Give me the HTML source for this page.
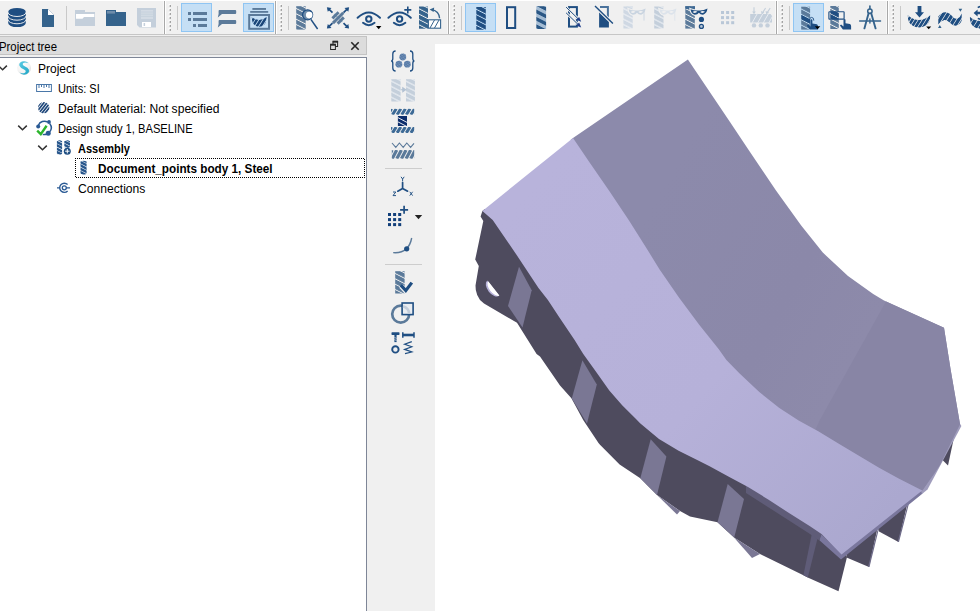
<!DOCTYPE html>
<html>
<head>
<meta charset="utf-8">
<title>Project</title>
<style>
html,body{margin:0;padding:0;}
body{width:980px;height:611px;overflow:hidden;background:#f0f0f0;font-family:"Liberation Sans",sans-serif;font-size:12px;color:#000;position:relative;}
.abs{position:absolute;}
#topline{left:0;top:0;width:980px;height:1px;background:#fff;}
#tbline{left:0;top:34px;width:980px;height:1px;background:#c6c6c6;}
#title{left:-1px;top:36px;width:368px;height:19px;background:#dcdcdc;border:1px solid #c3c3c3;box-sizing:border-box;}
#tree{left:-1px;top:57px;width:368px;height:560px;background:#fff;border:1px solid #7e8697;box-sizing:border-box;}
#view{left:435px;top:44px;width:545px;height:567px;background:#fff;}
.t{position:absolute;white-space:nowrap;line-height:16px;height:16px;transform-origin:0 50%;}
.b{font-weight:bold;}
svg{position:absolute;overflow:visible;}
</style>
</head>
<body>
<div id="topline" class="abs"></div>
<div id="tbline" class="abs"></div>
<div id="title" class="abs"></div>
<div id="tree" class="abs"></div>
<div id="view" class="abs"></div>

<!-- TOOLBAR -->
<svg id="tb" class="abs" style="left:0;top:0;" width="980" height="36" viewBox="0 0 980 36">
<defs>
<pattern id="pDB" width="20" height="5.35" patternUnits="userSpaceOnUse" patternTransform="translate(0,2.8) skewY(27)"><rect width="20" height="4.35" fill="#1f4e82"/></pattern>
<pattern id="pMB" width="20" height="5.35" patternUnits="userSpaceOnUse" patternTransform="translate(0,2.8) skewY(27)"><rect width="20" height="4.35" fill="#35638c"/></pattern>
<pattern id="pGB" width="20" height="5.35" patternUnits="userSpaceOnUse" patternTransform="translate(0,2.8) skewY(27)"><rect width="20" height="4.35" fill="#5b7a9a"/></pattern>
<pattern id="pDS" width="20" height="5.35" patternUnits="userSpaceOnUse" patternTransform="translate(0,2.8) skewY(27)"><rect width="20" height="4" fill="#c4cfdb"/><rect y="4" width="20" height="1.35" fill="#e1e7ee"/></pattern>
<pattern id="pTR" width="20" height="7.4" patternUnits="userSpaceOnUse" patternTransform="translate(0,-4) skewY(27)"><rect width="20" height="3.7" fill="#2a5785"/><rect y="3.7" width="20" height="3.7" fill="#a3bbd3"/></pattern>
<pattern id="pDG" width="3.2" height="20" patternUnits="userSpaceOnUse" patternTransform="skewX(-35)"><rect width="2.1" height="20" fill="#5b7a9a"/></pattern>
<pattern id="pDGd" width="3.9" height="20" patternUnits="userSpaceOnUse" patternTransform="translate(1,0) skewX(-32)"><rect width="3.05" height="20" fill="#1b4679"/></pattern>
<pattern id="pDGs" width="3.6" height="20" patternUnits="userSpaceOnUse" patternTransform="skewX(-35)"><rect width="2.3" height="20" fill="#5b7a9a"/></pattern>
</defs>
<path d="M8.2,12 A8.8,4.1 0 0 1 25.8,12 V23 A8.8,4.1 0 0 1 8.2,23 Z" fill="#1f4e82"/><g fill="none" stroke="#f0f0f0" stroke-width="0.95"><path d="M8,12.3 A8.8,4.1 0 0 0 26,12.3"/><path d="M8,16 A8.8,4.1 0 0 0 26,16"/><path d="M8,19.6 A8.8,4.1 0 0 0 26,19.6"/></g>
<path d="M42,9 H48 L54,15 V27 H42 Z" fill="#35638c"/><path d="M48,9 L54,15 H48 Z" fill="#fff"/>
<rect x="66" y="6" width="1" height="24" fill="#c9c9c9"/>
<path d="M75,10 H85 V12 H95 V26 H75 Z" fill="#c4cfdb"/><path d="M76,14 H94.3 V17 H84 L82.5,18.7 H76 Z" fill="#fff"/>
<path d="M106,10 H116 V12 H126 V26 H106 Z" fill="#35638c"/><rect x="107" y="11" width="8" height="2.6" fill="#6f8dab"/>
<path d="M137,8 H156 V27.6 H139.5 L137,25 Z" fill="#c4cfdb"/><rect x="141" y="10" width="12" height="9" fill="#d3dbe4"/><g stroke="#c4cfdb" stroke-width="0.8"><path d="M141,12 H153 M141,14.2 H153 M141,16.4 H153"/></g><rect x="142" y="22" width="9" height="5" fill="#fff"/><rect x="143.6" y="23" width="1.5" height="3" fill="#c4cfdb"/>
<rect x="163" y="1" width="1" height="33" fill="#f8f8f8"/><rect x="164" y="1" width="1" height="33" fill="#a8a8a8"/><rect x="165" y="1" width="1" height="33" fill="#fff"/>
<rect x="168.6" y="4.2" width="1.8" height="1.8" fill="#fff"/><rect x="169.6" y="5.0" width="1.4" height="1.9" fill="#a0a0a0"/>
<rect x="168.6" y="8.2" width="1.8" height="1.8" fill="#fff"/><rect x="169.6" y="9.0" width="1.4" height="1.9" fill="#a0a0a0"/>
<rect x="168.6" y="12.2" width="1.8" height="1.8" fill="#fff"/><rect x="169.6" y="13.0" width="1.4" height="1.9" fill="#a0a0a0"/>
<rect x="168.6" y="16.2" width="1.8" height="1.8" fill="#fff"/><rect x="169.6" y="17.0" width="1.4" height="1.9" fill="#a0a0a0"/>
<rect x="168.6" y="20.2" width="1.8" height="1.8" fill="#fff"/><rect x="169.6" y="21.0" width="1.4" height="1.9" fill="#a0a0a0"/>
<rect x="168.6" y="24.2" width="1.8" height="1.8" fill="#fff"/><rect x="169.6" y="25.0" width="1.4" height="1.9" fill="#a0a0a0"/>
<rect x="168.6" y="28.2" width="1.8" height="1.8" fill="#fff"/><rect x="169.6" y="29.0" width="1.4" height="1.9" fill="#a0a0a0"/>
<rect x="177" y="6" width="1" height="24" fill="#c9c9c9"/>
<rect x="181.5" y="3.5" width="30" height="28" fill="#c5dff5" stroke="#8fc5f3" stroke-width="1"/>
<rect x="188" y="12" width="3" height="3" fill="#5b7a9a"/><rect x="193" y="12" width="14" height="3" fill="#5b7a9a"/>
<rect x="188" y="18" width="3" height="3" fill="#5b7a9a"/><rect x="193" y="18" width="14" height="3" fill="#5b7a9a"/>
<rect x="193" y="24" width="3" height="3" fill="#5b7a9a"/><rect x="198" y="24" width="9" height="3" fill="#5b7a9a"/>
<path d="M219.4,10 H235.2 Q236.2,10 236.2,11 V13 Q236.2,14 235.2,14 H222 L217.8,17.6 L218.6,14 V11 Q218.6,10 219.4,10 Z" fill="#5b7a9a"/>
<path d="M219.4,20 H235.2 Q236.2,20 236.2,21 V23 Q236.2,24 235.2,24 H222 L217.8,27.6 L218.6,24 V21 Q218.6,20 219.4,20 Z" fill="#5b7a9a"/>
<rect x="243.5" y="3.5" width="30" height="28" fill="#c5dff5" stroke="#8fc5f3" stroke-width="1"/>
<rect x="252.4" y="8" width="13.6" height="1.9" fill="#5b7a9a"/><rect x="250.2" y="11" width="18" height="1.8" fill="#5b7a9a"/><rect x="249.2" y="15" width="19.8" height="13.8" fill="none" stroke="#5b7a9a" stroke-width="2"/>
<clipPath id="cq1"><path d="M251.8,17 Q252,22.6 254,24.6 Q256.5,26.8 259.2,26.8 Q262,26.8 264.4,24.6 Q266.4,22.6 266.6,17 Q259.2,23 251.8,17 Z"/></clipPath><g clip-path="url(#cq1)" stroke="#1b4679" stroke-width="2.5" fill="none"><path d="M244.00,28 L251.50,16 M247.89,28 L255.39,16 M251.78,28 L259.28,16 M255.68,28 L263.17,16 M259.57,28 L267.07,16 M263.46,28 L270.96,16 M267.35,28 L274.85,16 M271.24,28 L278.74,16"/></g>
<rect x="274" y="1" width="1" height="33" fill="#f8f8f8"/><rect x="275" y="1" width="1" height="33" fill="#a8a8a8"/><rect x="276" y="1" width="1" height="33" fill="#fff"/>
<rect x="279.6" y="4.2" width="1.8" height="1.8" fill="#fff"/><rect x="280.6" y="5.0" width="1.4" height="1.9" fill="#a0a0a0"/>
<rect x="279.6" y="8.2" width="1.8" height="1.8" fill="#fff"/><rect x="280.6" y="9.0" width="1.4" height="1.9" fill="#a0a0a0"/>
<rect x="279.6" y="12.2" width="1.8" height="1.8" fill="#fff"/><rect x="280.6" y="13.0" width="1.4" height="1.9" fill="#a0a0a0"/>
<rect x="279.6" y="16.2" width="1.8" height="1.8" fill="#fff"/><rect x="280.6" y="17.0" width="1.4" height="1.9" fill="#a0a0a0"/>
<rect x="279.6" y="20.2" width="1.8" height="1.8" fill="#fff"/><rect x="280.6" y="21.0" width="1.4" height="1.9" fill="#a0a0a0"/>
<rect x="279.6" y="24.2" width="1.8" height="1.8" fill="#fff"/><rect x="280.6" y="25.0" width="1.4" height="1.9" fill="#a0a0a0"/>
<rect x="279.6" y="28.2" width="1.8" height="1.8" fill="#fff"/><rect x="280.6" y="29.0" width="1.4" height="1.9" fill="#a0a0a0"/>
<rect x="288" y="6" width="1" height="24" fill="#c9c9c9"/>
<g transform="translate(296.2,6.2)"><rect x="0" y="0" width="9.5" height="23.4" fill="url(#pGB)"/></g>
<circle cx="307.6" cy="14.8" r="5" fill="#6f8dab" stroke="#1f4e82" stroke-width="1.3"/><circle cx="309.2" cy="15.1" r="3.3" fill="#fff"/><path d="M310.9,19.4 L317.6,29" stroke="#1f4e82" stroke-width="1.5" fill="none"/>
<path d="M328.1,8.4 L332.5,12.6" stroke="#1f4e82" stroke-width="1.7"/>
<path d="M326.9,7.3 L327.8,11.8 L331.5,7.9Z" fill="#1f4e82"/>
<path d="M347.9,8.4 L343.5,12.7" stroke="#1f4e82" stroke-width="1.7"/>
<path d="M349.1,7.3 L344.5,8.0 L348.3,11.8Z" fill="#1f4e82"/>
<path d="M328.1,27.4 L332.5,23.2" stroke="#1f4e82" stroke-width="1.7"/>
<path d="M326.9,28.5 L331.5,27.9 L327.8,24.0Z" fill="#1f4e82"/>
<path d="M347.9,27.4 L343.5,23.1" stroke="#1f4e82" stroke-width="1.7"/>
<path d="M349.1,28.5 L348.3,24.0 L344.5,27.8Z" fill="#1f4e82"/>
<path d="M334,14 L342.4,22" stroke="#a9bdd1" stroke-width="1.2"/>
<path d="M332.4,18.4 L338.6,12.2" stroke="#5b7a9a" stroke-width="2.9"/>
<path d="M332.9,23.1 L343.3,12.7" stroke="#5b7a9a" stroke-width="2.9"/>
<path d="M337.6,23.6 L343.8,17.4" stroke="#5b7a9a" stroke-width="2.9"/>
<g stroke="#1f4e82" fill="none" stroke-linecap="round"><path d="M357.6,17.7 Q368.8,7.2 380.0,17.7" stroke-width="2"/><circle cx="368.8" cy="19" r="2.7" stroke-width="2"/><path d="M363.0,22.8 Q368.8,27.6 374.6,22.8" stroke-width="1.9"/></g>
<path d="M376,26 H381.4 L378.7,29.2Z" fill="#000"/>
<g stroke="#1f4e82" fill="none" stroke-linecap="round"><path d="M388.40000000000003,17.7 Q399.6,7.2 410.8,17.7" stroke-width="2"/><circle cx="399.6" cy="19" r="2.7" stroke-width="2"/><path d="M393.8,22.8 Q399.6,27.6 405.40000000000003,22.8" stroke-width="1.9"/></g>
<path d="M407.8,6.4 V13.4 M404.3,9.9 H411.3" stroke="#1f4e82" stroke-width="1.6" fill="none"/>
<g transform="translate(419,6.5)"><rect x="0" y="0" width="9" height="22.2" fill="url(#pMB)"/></g>
<rect x="428.4" y="19.8" width="12.2" height="8.4" fill="#fff" stroke="#35638c" stroke-width="1.1"/><path d="M430,28 L434.5,20 M434.5,28 L439,20" stroke="#35638c" stroke-width="1" fill="none"/><path d="M439.6,18.2 Q439,11 432,9.6" stroke="#35638c" stroke-width="1.3" fill="none"/><path d="M429.6,9.4 L434.2,7.6 L433.6,12Z" fill="#35638c"/>
<rect x="447" y="1" width="1" height="33" fill="#f8f8f8"/><rect x="448" y="1" width="1" height="33" fill="#a8a8a8"/><rect x="449" y="1" width="1" height="33" fill="#fff"/>
<rect x="452.6" y="4.2" width="1.8" height="1.8" fill="#fff"/><rect x="453.6" y="5.0" width="1.4" height="1.9" fill="#a0a0a0"/>
<rect x="452.6" y="8.2" width="1.8" height="1.8" fill="#fff"/><rect x="453.6" y="9.0" width="1.4" height="1.9" fill="#a0a0a0"/>
<rect x="452.6" y="12.2" width="1.8" height="1.8" fill="#fff"/><rect x="453.6" y="13.0" width="1.4" height="1.9" fill="#a0a0a0"/>
<rect x="452.6" y="16.2" width="1.8" height="1.8" fill="#fff"/><rect x="453.6" y="17.0" width="1.4" height="1.9" fill="#a0a0a0"/>
<rect x="452.6" y="20.2" width="1.8" height="1.8" fill="#fff"/><rect x="453.6" y="21.0" width="1.4" height="1.9" fill="#a0a0a0"/>
<rect x="452.6" y="24.2" width="1.8" height="1.8" fill="#fff"/><rect x="453.6" y="25.0" width="1.4" height="1.9" fill="#a0a0a0"/>
<rect x="452.6" y="28.2" width="1.8" height="1.8" fill="#fff"/><rect x="453.6" y="29.0" width="1.4" height="1.9" fill="#a0a0a0"/>
<rect x="461" y="6" width="1" height="24" fill="#c9c9c9"/>
<rect x="465.5" y="3.5" width="30" height="28" fill="#c5dff5" stroke="#8fc5f3" stroke-width="1"/>
<g transform="translate(476.3,7)"><rect x="0" y="0" width="9.5" height="22.7" fill="url(#pDB)"/></g>
<rect x="507" y="7.2" width="8.2" height="20.8" fill="none" stroke="#1f4e82" stroke-width="2"/>
<g transform="translate(536.3,6.2)"><rect x="0" y="0" width="9.8" height="22.8" fill="url(#pTR)"/></g>
<rect x="569" y="7.1" width="7.9" height="19.5" fill="none" stroke="#1f4e82" stroke-width="2"/><g stroke="#f0f0f0" stroke-width="2.6" fill="none"><path d="M566.1,7.1 L579.6,20.2 M566.1,12.8 L579.6,25.9"/></g><g stroke="#1f4e82" stroke-width="1" fill="none"><path d="M566.1,7.1 L578,18.7 M566.1,12.8 L578,24.4"/></g><g fill="#1f3f8a"><path d="M581.2,21.8 L576.2,19.8 L579.1,16.9Z"/><path d="M581.2,27.4 L576.2,25.4 L579.1,22.5Z"/></g>
<path d="M600,7.1 H607.9 V18" fill="none" stroke="#4a729c" stroke-width="2"/><path d="M599.1,12 L608.9,21.6 V27.6 H599.1Z" fill="#1f4e82"/><path d="M595,6 L612.9,23.6" stroke="#f0f0f0" stroke-width="3.4"/><path d="M595,6 L612.9,23.6" stroke="#1f4e82" stroke-width="1.4"/>
<pattern id="pDS2" width="20" height="5.35" patternUnits="userSpaceOnUse" patternTransform="translate(0,2.8) skewY(27)"><rect width="20" height="4" fill="#cfd8e3"/><rect y="4" width="20" height="1.35" fill="#e6ebf1"/></pattern>
<g transform="translate(623.4,6.5)"><rect x="0" y="0" width="9.3" height="22" fill="url(#pDS2)"/></g>
<path d="M626.4,7 H632.7" stroke="#d3dce6" stroke-width="1"/>
<path d="M628.6,9.2 Q632.8,10.9 637.0,10.5 Q641.1999999999999,10.9 645.6,8.6 Q645.0,13.6 641.1999999999999,14.8 Q638.4,14.9 637.0,12.7 Q635.6,14.9 632.8,14.8 Q629.1999999999999,13.8 628.6,9.2Z" fill="#f0f0f0" stroke="#f0f0f0" stroke-width="2.2"/>
<path d="M644.0,11 V20.6" stroke="#c9d4e0" stroke-width="0.9"/>
<path d="M628.6,9.2 Q632.8,10.9 637.0,10.5 Q641.1999999999999,10.9 645.6,8.6 Q645.0,13.6 641.1999999999999,14.8 Q638.4,14.9 637.0,12.7 Q635.6,14.9 632.8,14.8 Q629.1999999999999,13.8 628.6,9.2Z" fill="#c9d4e0"/>
<path d="M630.7,12 Q633.1,10 635.5,11.8 Q633.1,13.9 630.7,12Z" fill="#f0f0f0"/>
<path d="M638.3,12 Q640.6999999999999,10 643.0999999999999,11.8 Q640.6999999999999,13.9 638.3,12Z" fill="#f0f0f0"/>
<g transform="translate(654.2,6.5)"><rect x="0" y="0" width="9.3" height="22" fill="url(#pDS)"/></g>
<path d="M659.4000000000001,9.2 Q663.6,10.9 667.8000000000001,10.5 Q672.0,10.9 676.4000000000001,8.6 Q675.8000000000001,13.6 672.0,14.8 Q669.2,14.9 667.8000000000001,12.7 Q666.4000000000001,14.9 663.6,14.8 Q660.0,13.8 659.4000000000001,9.2Z" fill="#f0f0f0" stroke="#f0f0f0" stroke-width="2.2"/>
<path d="M674.8000000000001,11 V20.6" stroke="#dce3eb" stroke-width="0.9"/>
<path d="M659.4000000000001,9.2 Q663.6,10.9 667.8000000000001,10.5 Q672.0,10.9 676.4000000000001,8.6 Q675.8000000000001,13.6 672.0,14.8 Q669.2,14.9 667.8000000000001,12.7 Q666.4000000000001,14.9 663.6,14.8 Q660.0,13.8 659.4000000000001,9.2Z" fill="#dce3eb"/>
<path d="M661.5000000000001,12 Q663.9000000000001,10 666.3000000000001,11.8 Q663.9000000000001,13.9 661.5000000000001,12Z" fill="#f0f0f0"/>
<path d="M669.1,12 Q671.5,10 673.9,11.8 Q671.5,13.9 669.1,12Z" fill="#f0f0f0"/>
<g transform="translate(685.3,6.2)"><rect x="0" y="0" width="9.5" height="22.4" fill="url(#pGB)"/></g>
<path d="M685.3,6.2 H695 V9 H685.3Z" fill="#3f6a94"/>
<path d="M690.5,9.2 Q694.6999999999999,10.9 698.9,10.5 Q703.0999999999999,10.9 707.5,8.6 Q706.9,13.6 703.0999999999999,14.8 Q700.3,14.9 698.9,12.7 Q697.5,14.9 694.6999999999999,14.8 Q691.0999999999999,13.8 690.5,9.2Z" fill="#f0f0f0" stroke="#f0f0f0" stroke-width="2.2"/>
<path d="M690.5,9.2 Q694.6999999999999,10.9 698.9,10.5 Q703.0999999999999,10.9 707.5,8.6 Q706.9,13.6 703.0999999999999,14.8 Q700.3,14.9 698.9,12.7 Q697.5,14.9 694.6999999999999,14.8 Q691.0999999999999,13.8 690.5,9.2Z" fill="#1f4e82"/>
<path d="M692.6,12 Q695.0,10 697.4,11.8 Q695.0,13.9 692.6,12Z" fill="#f0f0f0"/>
<path d="M700.1999999999999,12 Q702.5999999999999,10 704.9999999999999,11.8 Q702.5999999999999,13.9 700.1999999999999,12Z" fill="#f0f0f0"/>
<circle cx="701.4" cy="19.4" r="2.6" fill="#1f4e82"/><circle cx="701.4" cy="26.4" r="2" fill="#b7c6d8" stroke="#1f4e82" stroke-width="1.3"/>
<rect x="721.0" y="11.0" width="3" height="3" fill="#b9c7d7"/>
<rect x="721.0" y="16.1" width="3" height="3" fill="#b9c7d7"/>
<rect x="721.0" y="21.2" width="3" height="3" fill="#b9c7d7"/>
<rect x="726.1" y="11.0" width="3" height="3" fill="#b9c7d7"/>
<rect x="726.1" y="16.1" width="3" height="3" fill="#b9c7d7"/>
<rect x="726.1" y="21.2" width="3" height="3" fill="#b9c7d7"/>
<rect x="731.2" y="11.0" width="3" height="3" fill="#b9c7d7"/>
<rect x="731.2" y="16.1" width="3" height="3" fill="#b9c7d7"/>
<rect x="731.2" y="21.2" width="3" height="3" fill="#b9c7d7"/>
<g fill="#c4cfdb"><path d="M750.2,14 H770.6 L772,16 V22.6 H750.2Z"/><circle cx="754" cy="25.4" r="2.2"/><circle cx="760.8" cy="25.4" r="2.2"/><circle cx="767.5" cy="25.4" r="2.2"/></g><g stroke="#e9edf2" stroke-width="1" fill="none"><path d="M752,23 L757.4,13.5 M757.6,23 L763,13.5 M763.2,23 L768.6,13.5 M768.8,23 L772.6,16"/></g><g stroke="#c4cfdb" stroke-width="1.1" fill="none"><path d="M754,7.2 V12.6 M765.6,8 L762.8,12.4 M770.2,8 L767.4,12.4"/></g><g fill="#c4cfdb"><path d="M752.2,11.4 H755.8 L754,14.2Z"/><path d="M761,11 L764.4,12.6 L761.6,14.6Z"/><path d="M765.6,11 L769,12.6 L766.2,14.6Z"/></g>
<rect x="775" y="1" width="1" height="33" fill="#f8f8f8"/><rect x="776" y="1" width="1" height="33" fill="#a8a8a8"/><rect x="777" y="1" width="1" height="33" fill="#fff"/>
<rect x="780.6" y="4.2" width="1.8" height="1.8" fill="#fff"/><rect x="781.6" y="5.0" width="1.4" height="1.9" fill="#a0a0a0"/>
<rect x="780.6" y="8.2" width="1.8" height="1.8" fill="#fff"/><rect x="781.6" y="9.0" width="1.4" height="1.9" fill="#a0a0a0"/>
<rect x="780.6" y="12.2" width="1.8" height="1.8" fill="#fff"/><rect x="781.6" y="13.0" width="1.4" height="1.9" fill="#a0a0a0"/>
<rect x="780.6" y="16.2" width="1.8" height="1.8" fill="#fff"/><rect x="781.6" y="17.0" width="1.4" height="1.9" fill="#a0a0a0"/>
<rect x="780.6" y="20.2" width="1.8" height="1.8" fill="#fff"/><rect x="781.6" y="21.0" width="1.4" height="1.9" fill="#a0a0a0"/>
<rect x="780.6" y="24.2" width="1.8" height="1.8" fill="#fff"/><rect x="781.6" y="25.0" width="1.4" height="1.9" fill="#a0a0a0"/>
<rect x="780.6" y="28.2" width="1.8" height="1.8" fill="#fff"/><rect x="781.6" y="29.0" width="1.4" height="1.9" fill="#a0a0a0"/>
<rect x="789" y="6" width="1" height="24" fill="#c9c9c9"/>
<rect x="793.5" y="3.5" width="30" height="28" fill="#c5dff5" stroke="#8fc5f3" stroke-width="1"/>
<g transform="translate(801.2,6.7)"><rect x="0" y="0" width="8.9" height="22.9" fill="url(#pGB)"/><clipPath id="cq2"><path d="M0,7.649999999999999 L8.9,12.18 V17.53 L0,12.999999999999998Z"/></clipPath><rect x="0" y="0" width="8.9" height="22.9" fill="url(#pDB)" clip-path="url(#cq2)"/></g>
<path d="M810.4,20.2 a1,1 0 0 1 2,0 V23.4 L816.8,24.2 Q818.0,24.6 818.0,26.2 V29.6 H809.8 L806.8,25.799999999999997 L808.0,24.6 L810.4,26.6 Z" fill="#1f4e82"/>
<path d="M809.5,20.4 Q809.3,17.4 811.6,17.4 Q813.9,17.4 813.8,20.6" fill="none" stroke="#1f4e82" stroke-width="0.9"/>
<path d="M814.9,26.3 H820.3 L817.6,29.3Z" fill="#000"/>
<g transform="translate(830.3,6)"><rect x="0" y="0" width="8.5" height="23" fill="url(#pGB)"/><clipPath id="cq3"><rect x="0" y="5.7" width="8.5" height="7.3999999999999995"/></clipPath><rect x="0" y="0" width="8.5" height="23" fill="url(#pDB)" clip-path="url(#cq3)"/></g>
<rect x="828.9" y="11.7" width="15.2" height="7.4" rx="0.6" fill="none" stroke="#1f4e82" stroke-width="1.15"/>
<path d="M843.5,20 a1,1 0 0 1 2,0 V23.2 L849.9,24 Q851.1,24.4 851.1,26 V29.4 H842.9 L839.9,25.6 L841.1,24.4 L843.5,26.4 Z" fill="#1f4e82"/>
<g stroke="#35638c" fill="none" stroke-linecap="round"><circle cx="869.9" cy="11.2" r="2.2" stroke-width="1.5"/><path d="M869.9,6 V9" stroke-width="1.6"/><path d="M868.6,13.2 L864.4,28.4 M871.2,13.2 L875.6,28.4" stroke-width="1.9"/><path d="M859.6,21 H880.6" stroke-width="1.3"/><path d="M869.9,19 V23" stroke-width="1.4"/></g>
<rect x="886" y="1" width="1" height="33" fill="#f8f8f8"/><rect x="887" y="1" width="1" height="33" fill="#a8a8a8"/><rect x="888" y="1" width="1" height="33" fill="#fff"/>
<rect x="891.6" y="4.2" width="1.8" height="1.8" fill="#fff"/><rect x="892.6" y="5.0" width="1.4" height="1.9" fill="#a0a0a0"/>
<rect x="891.6" y="8.2" width="1.8" height="1.8" fill="#fff"/><rect x="892.6" y="9.0" width="1.4" height="1.9" fill="#a0a0a0"/>
<rect x="891.6" y="12.2" width="1.8" height="1.8" fill="#fff"/><rect x="892.6" y="13.0" width="1.4" height="1.9" fill="#a0a0a0"/>
<rect x="891.6" y="16.2" width="1.8" height="1.8" fill="#fff"/><rect x="892.6" y="17.0" width="1.4" height="1.9" fill="#a0a0a0"/>
<rect x="891.6" y="20.2" width="1.8" height="1.8" fill="#fff"/><rect x="892.6" y="21.0" width="1.4" height="1.9" fill="#a0a0a0"/>
<rect x="891.6" y="24.2" width="1.8" height="1.8" fill="#fff"/><rect x="892.6" y="25.0" width="1.4" height="1.9" fill="#a0a0a0"/>
<rect x="891.6" y="28.2" width="1.8" height="1.8" fill="#fff"/><rect x="892.6" y="29.0" width="1.4" height="1.9" fill="#a0a0a0"/>
<rect x="900" y="6" width="1" height="24" fill="#c9c9c9"/>
<path d="M917.6,6.1 H921.4 V12.2 H924 L919.5,17.6 L915,12.2 H917.6Z" fill="#1f4e82"/>
<clipPath id="cq4"><path d="M907.8,15.2 Q913,20 919,20 Q925,20 930.2,15.2 Q930.4,22.6 925.6,25.6 Q922.6,27.5 919,27.5 Q915.4,27.5 912.4,25.6 Q907.6,22.6 907.8,15.2Z"/></clipPath><g clip-path="url(#cq4)" stroke="#1f4e82" stroke-width="2.6" fill="none"><path d="M899.45,28 L908.20,14 M903.34,28 L912.09,14 M907.23,28 L915.98,14 M911.13,28 L919.87,14 M915.02,28 L923.77,14 M918.91,28 L927.66,14 M922.80,28 L931.55,14 M926.69,28 L935.44,14 M930.58,28 L939.33,14 M934.47,28 L943.22,14"/></g>
<path d="M926.2,26.4 H931.2 L928.7,29.2Z" fill="#000"/>
<clipPath id="cq5"><path d="M938.3,16.6 Q941.5,12 945.6,12.2 Q949.5,12.6 952.4,16.4 Q955,19.4 957.6,18.4 Q960.4,17 961.7,13.4 V20.6 Q960.4,24.4 956.4,25.6 Q952.6,26 949.6,22.6 Q947,19.6 944.4,20 Q941,20.8 938.3,24.4 Z"/></clipPath><g clip-path="url(#cq5)" stroke="#1f4e82" stroke-width="3.3" fill="none"><path d="M930.60,27 L940.60,11 M935.32,27 L945.32,11 M940.04,27 L950.03,11 M944.75,27 L954.75,11 M949.47,27 L959.47,11 M954.19,27 L964.18,11 M958.90,27 L968.90,11 M963.62,27 L973.62,11"/></g>
<path d="M958.6,8.8 H962.2 L960.4,11.8Z M938,28 H941.6 L939.8,25Z" fill="#35638c"/>
<clipPath id="cq6"><path d="M969.8,16.8 Q974,20.8 981,21 V28.8 Q976,28.6 973.4,26.4 Q970,23.6 969.8,16.8Z"/></clipPath><g clip-path="url(#cq6)" stroke="#1f4e82" stroke-width="3.6" fill="none"><path d="M964.48,29 L972.60,16 M969.55,29 L977.67,16 M974.62,29 L982.74,16 M979.69,29 L987.81,16 M984.76,29 L992.88,16"/></g>
<path d="M973.6,13 L977.6,9.4 V11.8 H981 V14.2 H977.6 V16.6Z" fill="#1f4e82"/><path d="M977.8,7.6 Q979,6.6 981,6.4 M977.8,18.4 Q979,19 981,19.2" stroke="#1f4e82" stroke-width="1.6" fill="none"/>
</svg>
<!-- /TOOLBAR -->

<!-- LEFTTB -->
<svg id="lt" class="abs" style="left:0;top:0;" width="980" height="611" viewBox="0 0 980 611">
<path d="M395.59999999999997,51 Q392.8,51 392.8,54 V58.6 Q392.8,61 391.2,61 Q392.8,61 392.8,63.4 V68 Q392.8,71 395.59999999999997,71" fill="none" stroke="#1f4e82" stroke-width="1.3"/>
<path d="M410.0,51 Q412.79999999999995,51 412.79999999999995,54 V58.6 Q412.79999999999995,61 414.4,61 Q412.79999999999995,61 412.79999999999995,63.4 V68 Q412.79999999999995,71 410.0,71" fill="none" stroke="#1f4e82" stroke-width="1.3"/>
<circle cx="402.8" cy="57" r="3.4" fill="#7391b8"/>
<g stroke="#3f6797" stroke-width="0.5" opacity=".8"><path d="M399.8,56 L403.8,53.8 M399.6,58 L405.8,54.8 M400.8,59.6 L406.1,57 M401.8,53.8 L405.8,58.4 M400.2,55 L404.2,60 M399.5,57.4 L402.2,60.2"/></g>
<circle cx="398.9" cy="64.2" r="3.4" fill="#7391b8"/>
<g stroke="#3f6797" stroke-width="0.5" opacity=".8"><path d="M395.9,63.2 L399.9,61.0 M395.7,65.2 L401.9,62.0 M396.9,66.8 L402.2,64.2 M397.9,61.0 L401.9,65.60000000000001 M396.29999999999995,62.2 L400.29999999999995,67.2 M395.59999999999997,64.60000000000001 L398.29999999999995,67.4"/></g>
<circle cx="407.3" cy="64.2" r="3.4" fill="#7391b8"/>
<g stroke="#3f6797" stroke-width="0.5" opacity=".8"><path d="M404.3,63.2 L408.3,61.0 M404.1,65.2 L410.3,62.0 M405.3,66.8 L410.6,64.2 M406.3,61.0 L410.3,65.60000000000001 M404.7,62.2 L408.7,67.2 M404.0,64.60000000000001 L406.7,67.4"/></g>
<g transform="translate(391.3,79.2)"><rect x="0" y="0" width="9.3" height="22.3" fill="url(#pDS)"/></g>
<g transform="translate(406,79.2)"><rect x="0" y="0" width="8.9" height="22.3" fill="url(#pDS)"/></g>
<path d="M400.8,89.7 H404 M402.8,87.8 L405.6,89.7 L402.8,91.6Z" stroke="#b3c2d3" stroke-width="1.1" fill="#b3c2d3"/>
<clipPath id="cl101"><path d="M391,108.8 H414.2 V114.7 H391Z"/></clipPath><g clip-path="url(#cl101)" stroke="#3d6a96" stroke-width="3.0" fill="none"><path d="M387.91,114.7 L391.60,108.8 M392.51,114.7 L396.20,108.8 M397.11,114.7 L400.80,108.8 M401.71,114.7 L405.40,108.8 M406.31,114.7 L410.00,108.8 M410.91,114.7 L414.59,108.8 M415.51,114.7 L419.19,108.8 M420.10,114.7 L423.79,108.8"/></g>
<clipPath id="cl102"><path d="M391,127 H414.2 V132.9 H391Z"/></clipPath><g clip-path="url(#cl102)" stroke="#3d6a96" stroke-width="3.0" fill="none"><path d="M387.91,132.9 L391.60,127 M392.51,132.9 L396.20,127 M397.11,132.9 L400.80,127 M401.71,132.9 L405.40,127 M406.31,132.9 L410.00,127 M410.91,132.9 L414.59,127 M415.51,132.9 L419.19,127 M420.10,132.9 L423.79,127"/></g>
<rect x="397.9" y="116" width="9.1" height="10" fill="#0c2d6b"/><path d="M397.9,117.6 L407,122.4 M397.9,121.8 L407,126.6" stroke="#fff" stroke-width="0.9"/>
<path d="M392,143 L395.8,147.4 L399.4,143 L403.2,147.4 L406.8,143 L410.6,147.4 L414,143.4" fill="none" stroke="#5b7a9a" stroke-width="1.1"/>
<clipPath id="cl103"><path d="M391.8,150.1 H414.2 V158.7 H391.8Z"/></clipPath><g clip-path="url(#cl103)" stroke="#5b7a9a" stroke-width="3.2" fill="none"><path d="M387.53,158.7 L392.10,150.1 M392.17,158.7 L396.74,150.1 M396.81,158.7 L401.39,150.1 M401.46,158.7 L406.03,150.1 M406.10,158.7 L410.67,150.1 M410.74,158.7 L415.32,150.1 M415.39,158.7 L419.96,150.1 M420.03,158.7 L424.60,150.1"/></g>
<rect x="385" y="168" width="37" height="1" fill="#cdcdcd"/>
<g stroke="#1f4e82" stroke-width="1.7" fill="none" stroke-linecap="round"><path d="M402.6,188.4 V182.4 M402.6,188.4 L397.8,191.2 M402.6,188.4 L407.6,191.2"/></g>
<g stroke="#1f4e82" stroke-width="0.95" fill="none"><path d="M401,176.8 L402.6,179 L404.2,176.8 M402.6,179 V181 M393,192 H395.8 L393,195.6 H396 M409.8,191.8 L412.6,195.6 M412.6,191.8 L409.8,195.6"/></g>
<rect x="388.0" y="213.0" width="3" height="3" fill="#123f7a"/>
<rect x="388.0" y="218.1" width="3" height="3" fill="#123f7a"/>
<rect x="388.0" y="223.1" width="3" height="3" fill="#123f7a"/>
<rect x="393.1" y="213.0" width="3" height="3" fill="#123f7a"/>
<rect x="393.1" y="218.1" width="3" height="3" fill="#123f7a"/>
<rect x="393.1" y="223.1" width="3" height="3" fill="#123f7a"/>
<rect x="398.2" y="213.0" width="3" height="3" fill="#123f7a"/>
<rect x="398.2" y="218.1" width="3" height="3" fill="#123f7a"/>
<rect x="398.2" y="223.1" width="3" height="3" fill="#123f7a"/>
<path d="M404.1,205.8 V213.8 M400.1,209.8 H408.1" stroke="#1f4e82" stroke-width="1.7" fill="none"/>
<path d="M414.8,215 H422.2 L418.5,219.2Z" fill="#222"/>
<path d="M393.2,252.6 Q408.6,253.8 411.7,238" fill="none" stroke="#5b7a9a" stroke-width="1.4"/><circle cx="406.7" cy="248.8" r="2.6" fill="#1f4e82"/>
<rect x="385" y="264" width="37" height="1" fill="#cdcdcd"/>
<g transform="translate(395.2,271.2)"><rect x="0" y="0" width="9.4" height="22.3" fill="url(#pGB)"/></g>
<path d="M401,286 L405.8,291 L411.8,283.6" fill="none" stroke="#f0f0f0" stroke-width="5" /><path d="M400.9,285.2 L405.8,290.6 L411.8,282.6" fill="none" stroke="#1f4e82" stroke-width="3.2"/>
<circle cx="400.7" cy="314.1" r="8.5" fill="none" stroke="#5b7a9a" stroke-width="2.7"/><rect x="402.1" y="303" width="11" height="11.6" fill="#e9edf2" stroke="#1f4e82" stroke-width="1.6"/><path d="M403,306.2 A8.5,8.5 0 0 1 409.2,313.8" fill="none" stroke="#c3cedb" stroke-width="2.7"/>
<g fill="#1f4e82"><rect x="391.5" y="332.3" width="8" height="2.6" rx="0.6"/><rect x="394.4" y="334.9" width="2.2" height="7.2"/></g><g stroke="#f0f0f0" stroke-width="0.6"><path d="M394.4,337.4 L396.6,338.4 M394.4,339.6 L396.6,340.6"/></g><circle cx="395.4" cy="349.4" r="3.2" fill="none" stroke="#1f4e82" stroke-width="1.9"/><g stroke="#1f4e82" fill="none"><path d="M402.8,332.2 V337.8 M414,332.2 V337.8" stroke-width="1.5"/><path d="M402.8,335 H414" stroke-width="2.6"/><path d="M411.8,341.6 L404.6,344.2 L411.8,346.8 L404.6,349.4 L411.8,352 L405,353.6" stroke-width="1.2"/></g>
</svg>
<!-- /LEFTTB -->

<!-- TREEIC -->
<svg id="tr" class="abs" style="left:0;top:0;" width="980" height="611" viewBox="0 0 980 611">
<path d="M-1.6999999999999997,65.60000000000001 L2.6,69.8 L6.9,65.60000000000001" fill="none" stroke="#333" stroke-width="1.5"/>
<path d="M18.2,125.60000000000001 L22.5,129.8 L26.8,125.60000000000001" fill="none" stroke="#333" stroke-width="1.5"/>
<path d="M38.2,145.6 L42.5,149.79999999999998 L46.8,145.6" fill="none" stroke="#333" stroke-width="1.5"/>
<g fill="none" stroke="#262626"><rect x="333" y="41.9" width="4.6" height="4.6" stroke-width="1"/><path d="M332.5,41.6 H338.1" stroke-width="1.8"/><rect x="330.6" y="44.9" width="4.8" height="4.6" fill="#dcdcdc" stroke-width="1"/><path d="M330.1,44.6 H335.9" stroke-width="1.8"/><path d="M351.3,42.3 L358.7,49.7 M358.7,42.3 L351.3,49.7" stroke-width="1.6"/></g>
<defs><radialGradient id="sph" cx="0.4" cy="0.35" r="0.7"><stop offset="0" stop-color="#ffffff"/><stop offset="0.7" stop-color="#f2f2f2"/><stop offset="1" stop-color="#d4d4d4"/></radialGradient><linearGradient id="sg" x1="0" y1="0" x2="1" y2="1"><stop offset="0" stop-color="#5ccbe3"/><stop offset="1" stop-color="#1fa6c6"/></linearGradient></defs>
<circle cx="24" cy="67.9" r="6.9" fill="url(#sph)"/>
<path d="M28.6,63 Q25.4,60.6 22,61.6 Q18.6,62.8 19.4,65.8 Q20.2,68 24,69.4 Q26.6,70.6 25.2,72.4 Q23.2,74 19.4,72.6 Q22.4,75.6 26.4,74.2 Q29.8,72.6 28.8,69.6 Q28,67.6 24.6,66.2 Q22,65 22.8,63.4 Q24.4,61.8 28.6,63Z" fill="url(#sg)"/>
<rect x="36.6" y="84.5" width="14.8" height="7" fill="#fff" stroke="#4a77a8" stroke-width="1"/><path d="M39,85 V88 M41.5,85 V87 M44,85 V88 M46.5,85 V87 M49,85 V88" stroke="#4a77a8" stroke-width="1"/>
<circle cx="43.7" cy="107.8" r="5.7" fill="#fff"/>
<clipPath id="ct201"><path d="M38,107.8 A5.7,5.7 0 1 1 49.4,107.8 A5.7,5.7 0 1 1 38,107.8Z"/></clipPath><g clip-path="url(#ct201)" stroke="#21497c" stroke-width="1.75" fill="none"><path d="M29.24,113.6 L38.30,102 M32.35,113.6 L41.41,102 M35.46,113.6 L44.52,102 M38.56,113.6 L47.63,102 M41.67,113.6 L50.74,102 M44.78,113.6 L53.85,102 M47.89,113.6 L56.95,102 M51.00,113.6 L60.06,102 M54.11,113.6 L63.17,102 M57.22,113.6 L66.28,102 M60.33,113.6 L69.39,102"/></g>
<g fill="none" stroke="#2a5a94" stroke-width="1.5"><path d="M38.3,125.4 A6.5,6.5 0 0 1 47.8,122.2"/><path d="M49.8,123.8 A6.5,6.5 0 0 1 49.6,132"/><path d="M46.4,134.2 A6.5,6.5 0 0 1 42,134.1"/></g><circle cx="49" cy="122" r="1.9" fill="#2a5a94"/><circle cx="48.2" cy="133.2" r="2.5" fill="#2a5a94"/><circle cx="38.2" cy="126.4" r="2" fill="#2a5a94"/><path d="M37,130.4 L40.8,134.2 L46.6,125.6" fill="none" stroke="#fff" stroke-width="3.6"/><path d="M37.2,130.6 L40.8,134.2 L46.6,125.8" fill="none" stroke="#2cb52c" stroke-width="2.4"/>
<clipPath id="ct202"><path d="M56.9,141.2 Q59.5,139.39999999999998 62.1,141.2 V153.7 Q59.5,155.5 56.9,153.7Z"/></clipPath><g clip-path="url(#ct202)" stroke="#27568c" stroke-width="2.45" fill="none"><path d="M25.02,139.2 L57.40,155.7 M31.62,139.2 L64.01,155.7 M38.23,139.2 L70.62,155.7 M44.84,139.2 L77.22,155.7 M51.45,139.2 L83.83,155.7 M58.06,139.2 L90.44,155.7 M64.67,139.2 L97.05,155.7 M71.27,139.2 L103.66,155.7 M77.88,139.2 L110.26,155.7 M84.49,139.2 L116.87,155.7 M91.10,139.2 L123.48,155.7 M97.71,139.2 L130.09,155.7"/></g>
<clipPath id="ct203"><path d="M64.3,141.2 Q67.14999999999999,139.39999999999998 70.0,141.2 V147.0 Q67.14999999999999,148.8 64.3,147.0Z"/></clipPath><g clip-path="url(#ct203)" stroke="#27568c" stroke-width="2.45" fill="none"><path d="M46.57,139.2 L65.80,149.0 M53.17,139.2 L72.41,149.0 M59.78,139.2 L79.02,149.0 M66.39,139.2 L85.62,149.0 M73.00,139.2 L92.23,149.0 M79.61,139.2 L98.84,149.0 M86.21,139.2 L105.45,149.0 M92.82,139.2 L112.06,149.0"/></g>
<circle cx="67.3" cy="151.2" r="3.5" fill="#1f4e82"/><path d="M65.1,151.2 H69.5 M67.3,149 V153.4" stroke="#fff" stroke-width="1"/>
<clipPath id="ct204"><path d="M80.5,161.6 Q83.55,159.79999999999998 86.6,161.6 V173.7 Q83.55,175.5 80.5,173.7Z"/></clipPath><g clip-path="url(#ct204)" stroke="#27568c" stroke-width="2.45" fill="none"><path d="M49.10,159.6 L80.70,175.7 M55.71,159.6 L87.31,175.7 M62.32,159.6 L93.92,175.7 M68.93,159.6 L100.52,175.7 M75.53,159.6 L107.13,175.7 M82.14,159.6 L113.74,175.7 M88.75,159.6 L120.35,175.7 M95.36,159.6 L126.96,175.7 M101.97,159.6 L133.56,175.7 M108.57,159.6 L140.17,175.7 M115.18,159.6 L146.78,175.7 M121.79,159.6 L153.39,175.7"/></g>
<g fill="none" stroke="#2a5a94"><path d="M67.6,184.6 A4.6,4.6 0 1 0 67.6,191" stroke-width="1.4"/><circle cx="64.3" cy="187.8" r="2" stroke-width="1.3"/><path d="M57,187.8 H59.8 M66,187.8 H70" stroke-width="1.3"/></g>
<rect x="75.5" y="158.5" width="289" height="19" fill="none" stroke="#000" stroke-width="1" stroke-dasharray="1 1" stroke-dashoffset="0.5" shape-rendering="crispEdges"/>
</svg>
<!-- /TREEIC -->

<!-- TEXT -->
<div class="t" id="tx0" style="left:-1px;top:39px;transform:scaleX(0.945);">Project tree</div>
<div class="t" id="tx1" style="left:38px;top:61px;transform:scaleX(1.0);">Project</div>
<div class="t" id="tx2" style="left:58px;top:81px;transform:scaleX(0.92);">Units: SI</div>
<div class="t" id="tx3" style="left:58px;top:101px;transform:scaleX(1.008);">Default Material: Not specified</div>
<div class="t" id="tx4" style="left:58px;top:121px;transform:scaleX(0.93);">Design study 1, BASELINE</div>
<div class="t b" id="tx5" style="left:78px;top:141px;transform:scaleX(0.915);">Assembly</div>
<div class="t b" id="tx6" style="left:98px;top:161px;transform:scaleX(0.977);">Document_points body 1, Steel</div>
<div class="t" id="tx7" style="left:78px;top:181px;transform:scaleX(1.01);">Connections</div>

<!-- MODEL -->
<svg id="model" class="abs" style="left:0;top:0;" width="980" height="611" viewBox="0 0 980 611">
<defs>
<linearGradient id="gL" gradientUnits="userSpaceOnUse" x1="520" y1="200" x2="880" y2="520">
<stop offset="0" stop-color="#b8b3db"/><stop offset="0.55" stop-color="#b6b1d9"/><stop offset="1" stop-color="#aba8cf"/>
</linearGradient>
<linearGradient id="gD" gradientUnits="userSpaceOnUse" x1="852" y1="360" x2="634" y2="238">
<stop offset="0" stop-color="#8d8aaa"/><stop offset="0.35" stop-color="#8b88a9"/><stop offset="1" stop-color="#8c8aab"/>
</linearGradient>
</defs>
<!-- dark side wall -->
<polygon fill="#4e4b5e" points="482.4,211.0 480.6,216.5 483.3,221.0 475.2,259.6 478.8,266.0 475.5,285.5 475.8,290.0 477.2,295.0 480.0,300.0 484.0,303.5 517.0,322.7 536.6,354.0 540.0,356.5 560.0,385.5 571.4,398.2 583.2,420.0 598.5,443.0 600.0,444.8 619.6,464.5 640.3,478.2 657.0,495.0 680.0,511.0 690.0,516.4 717.5,522.3 734.0,537.5 760.0,554.0 803.4,575.3 807.7,577.4 838.5,591.3 847.0,557.0 843.8,552.1 823.8,532.1 812.3,524.3 790.5,510.6 770.9,497.8 750.3,485.1 731.6,475.2 711.9,464.4 700.5,458.6 680.9,448.8 661.3,437.1 642.4,421.3 637.8,416.7 624.7,403.6 611.6,388.5 598.5,370.2 585.4,351.8 576.9,338.1 561.9,315.8 550.2,298.1 540.8,286.1 519.3,253.6 495.0,218.1 484.7,209.1"/>
<!-- ribs on side -->
<polygon fill="#7a7794" points="519,266.7 531.7,290.3 522.5,327.6 508,306"/>
<polygon fill="#7a7794" points="582.4,360.3 596.8,384.5 587,423.4 571.8,398.6"/>
<polygon fill="#7a7794" points="650.7,439.3 666.4,456.6 657,495 640.3,478.2"/>
<polygon fill="#7a7794" points="727.7,484 744,499 734.2,537.6 717.5,522.3"/>
<!-- protruding triangles -->
<polygon fill="#7a7794" points="657,495 677,514.5 680,511"/>
<polygon fill="#7a7794" points="734,537.5 752,558 760,554"/>
<!-- end ribs -->
<polygon fill="#4e4b5e" points="846,550 878,526 869,567 846.5,557.5"/>
<polygon fill="#4e4b5e" points="877,526 908,501 898.5,542 879,531.5"/>
<polygon fill="#4e4b5e" points="939,456 956,428 948,465.6 941,458.6"/>
<polygon fill="#6f6c8a" points="868,567 869.5,567 878.6,530 878,528"/>
<polygon fill="#6f6c8a" points="897.6,542 899,542 908.6,505 908,503"/>
<!-- rib edge strip -->
<polygon fill="#5f5c78" points="812,533 817.4,539 807.8,577.4 803.4,575.3"/>
<!-- plate thickness strips -->
<polygon fill="#7a779d" points="821,534 841,553 920.5,489 926,486 922,494 841,559.6 819.4,540.2"/>
<polygon fill="#5f5c78" points="746,485 800,519 822,533 819.4,540.2 817,539 810,534 746,492.9"/>
<polygon fill="#9f9cbc" points="959.6,423 961.4,426 927.5,489.5 922,494 920.5,489"/>
<!-- dark purple surface -->
<polygon fill="url(#gD)" points="570.7,139.8 573.0,137.9 687.9,59.4 730.0,122.0 749.0,150.4 776.0,190.5 801.2,225.6 822.8,252.6 848.0,276.0 873.2,294.0 884.0,300.5 944.0,327.7 950.7,370.0 960.0,424.0 940.0,464.8 934.0,473.7 923.0,489.4 922.2,490.4 919.9,492.3 896.3,480.5 876.7,469.7 857.0,457.9 837.3,446.1 815.9,433.2 796.3,422.4 776.7,409.7 757.0,393.9 737.3,375.3 724.1,361.9 716.3,350.9 696.7,326.4 677.0,299.9 657.3,271.4 645.3,251.9 626.7,222.3 607.0,192.8 587.3,164.3"/>
<polygon fill="#8885a5" points="886,301.4 944,327.7 950.7,370 960,424 940,464.8 934,473.7 923,489.4 922.2,490.4 898.6,478.6 879,467.8 859.3,456 839.6,444.2 818.2,431.3 815.5,429.5 819.6,420.4"/>
<!-- light surface -->
<polygon fill="url(#gL)" points="482.4,211.0 573.0,137.9 589.6,162.4 609.3,190.9 629.0,220.4 647.6,250.0 659.6,269.5 679.3,298.0 699.0,324.5 718.6,349.0 726.4,360.0 739.6,373.4 759.3,392.0 779.0,407.8 798.6,420.5 818.2,431.3 839.6,444.2 859.3,456.0 879.0,467.8 898.6,478.6 922.2,490.4 841.5,554.5 821.5,534.0 810.0,526.2 788.2,512.5 768.6,499.7 748.0,487.0 729.3,477.1 709.6,466.3 698.2,460.5 678.6,450.7 659.0,439.0 640.1,423.2 635.5,418.6 622.4,405.5 609.3,390.4 596.2,372.1 583.1,353.7 574.6,340.0 559.6,317.7 547.9,300.0 538.5,288.0 517.0,255.5 492.7,220.0"/>
<!-- hole -->
<path d="M487.2,280.6 L499.2,295.8 A9.6,5.6 52 0 1 487.2,280.6 Z" fill="#b8b3db"/>
<path d="M488.2,281.2 L499.4,295.6 A9.2,4.9 52 0 1 488.2,281.2 Z" fill="#fff"/>
</svg>

</body>
</html>
